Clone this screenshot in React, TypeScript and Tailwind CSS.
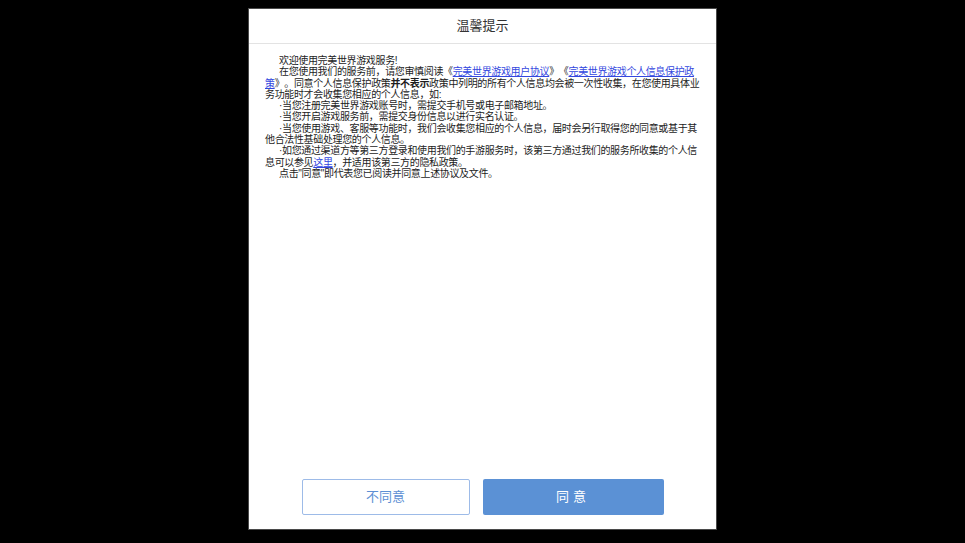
import React from "react";

const font = {
  fontFamily: '"Liberation Sans", "Noto Sans CJK SC", sans-serif',
};

function Link({ children }: { children: React.ReactNode }) {
  return <span className="text-[#3347de] underline underline-offset-1">{children}</span>;
}

export default function App() {
  return (
    <div className="w-full h-[543px] bg-black flex justify-center pt-[8px]" style={font}>
      <div className="w-[469px] h-[522px] bg-white border border-[#4a4a4a] flex flex-col">
        {/* header */}
        <div className="h-[35px] flex-shrink-0 flex items-center justify-center border-b border-[#e3e3e3]">
          <h3 className="text-[13px] text-[#333]">温馨提示</h3>
        </div>

        {/* body */}
        <div className="flex-1 pt-[11px] pl-[16px] pr-[16px] text-[10px] leading-[11.3px] tracking-[-0.35px] text-[#1c1c1c] whitespace-nowrap [text-spacing-trim:space-all]">
          <p className="indent-[14px]">欢迎使用完美世界游戏服务!</p>
          <p className="indent-[14px]">
            在您使用我们的服务前，请您审慎阅读《<Link>完美世界游戏用户协议</Link>》《
            <Link>完美世界游戏个人信息保护政</Link>
            <br />
            <Link>策</Link>》。同意个人信息保护政策<span className="font-semibold">并不表示</span>
            政策中列明的所有个人信息均会被一次性收集，在您使用具体业
            <br />
            务功能时才会收集您相应的个人信息，如:
          </p>
          <p className="indent-[14px]">·当您注册完美世界游戏账号时，需提交手机号或电子邮箱地址。</p>
          <p className="indent-[14px]">·当您开启游戏服务前，需提交身份信息以进行实名认证。</p>
          <p className="indent-[14px]">
            ·当您使用游戏、客服等功能时，我们会收集您相应的个人信息，届时会另行取得您的同意或基于其
            <br />
            他合法性基础处理您的个人信息。
          </p>
          <p className="indent-[14px]">
            ·如您通过渠道方等第三方登录和使用我们的手游服务时，该第三方通过我们的服务所收集的个人信
            <br />
            息可以参见<Link>这里</Link>，并适用该第三方的隐私政策。
          </p>
          <p className="indent-[14px]">点击"同意"即代表您已阅读并同意上述协议及文件。</p>
        </div>

        {/* buttons */}
        <div className="flex-shrink-0 flex justify-center gap-[13px] pb-[14px]">
          <button className="w-[168px] h-[36px] rounded-[2px] border border-[#9dbbe8] bg-white text-[13px] text-[#5d8fd4]">
            不同意
          </button>
          <button className="w-[181px] h-[36px] rounded-[2px] bg-[#5b91d5] text-[13px] text-white tracking-[4px]">
            同意
          </button>
        </div>
      </div>
    </div>
  );
}
